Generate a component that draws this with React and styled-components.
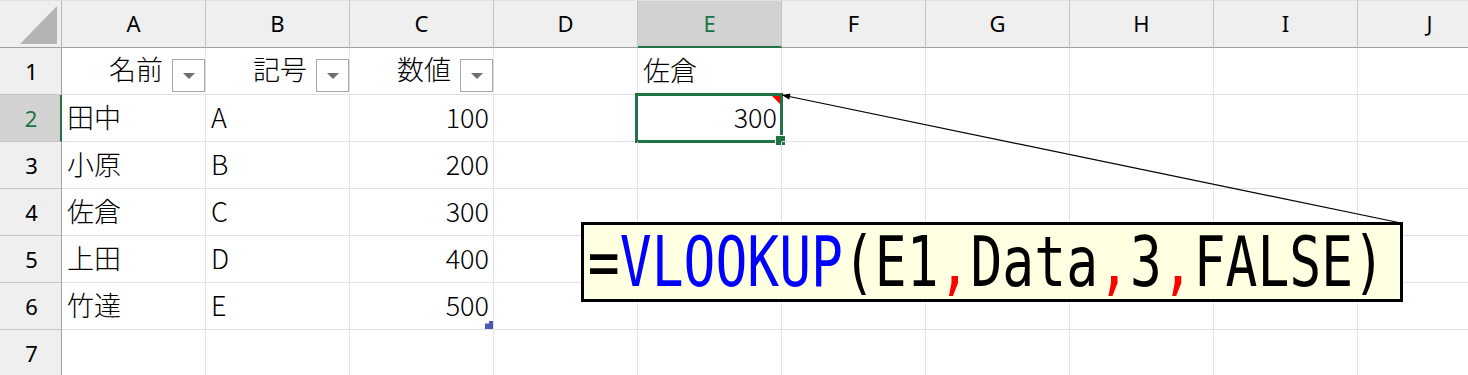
import React from 'react';
import styled, {createGlobalStyle} from 'styled-components';

const GlobalStyle = createGlobalStyle`
  body {
    margin:0;
    background:#fff;
    overflow:hidden;
  }
`;

const GREEN = '#217346';

const Sheet = styled.div`
  position:relative;
  width:1468px;
  height:375px;
  overflow:hidden;
  display:grid;
  grid-template-columns:62px repeat(10, 144px);
  grid-template-rows:48px repeat(7, 47px);
  font-family:'Noto Sans CJK JP', 'Noto Sans', sans-serif;
`;

const Corner = styled.div`
  background:#efefef;
  border-right:1px solid #b8b8b8;
  border-bottom:1px solid #a0a0a0;
  border-top:1px solid #e2e2e2;
  box-sizing:border-box;
  position:relative;
`;

const SelectAll = styled.div`
  position:absolute;
  right:4px;
  bottom:3px;
  width:0;
  height:0;
  border-left:37px solid transparent;
  border-bottom:38px solid #b4b4b4;
`;

const ColHeader = styled.div`
  background:${({$active}) => $active ? '#d2d2d2' : '#efefef'};
  color:${({$active}) => $active ? GREEN : '#000'};
  border-top:1px solid #e2e2e2;
  border-right:1px solid #c4c4c4;
  border-bottom:${({$active}) => $active ? `2px solid ${GREEN}` : '1px solid #a0a0a0'};
  box-sizing:border-box;
  display:flex;
  align-items:center;
  justify-content:center;
  font-family:'Noto Sans', 'Liberation Sans', sans-serif;
  font-size:22px;
  padding-bottom:2px;
`;

const RowHeader = styled.div`
  background:${({$active}) => $active ? '#d2d2d2' : '#efefef'};
  color:${({$active}) => $active ? GREEN : '#000'};
  border-right:${({$active}) => $active ? `2px solid ${GREEN}` : '1px solid #a0a0a0'};
  border-bottom:1px solid #c4c4c4;
  box-sizing:border-box;
  display:flex;
  align-items:center;
  justify-content:center;
  font-family:'Noto Sans', 'Liberation Sans', sans-serif;
  font-size:22px;
  padding-left:2px;
`;

const Cell = styled.div`
  position:relative;
  border-right:1px solid #e1e1e1;
  border-bottom:1px solid #e1e1e1;
  box-sizing:border-box;
  display:flex;
  align-items:center;
  justify-content:${({$align}) => $align === 'right' ? 'flex-end' : 'flex-start'};
  padding:0 4px 3px 5px;
  font-size:27px;
  font-weight:300;
  color:#000;
  white-space:nowrap;
`;

const HeadCell = styled(Cell)`
  gap:9px;
  padding:0 0 0 5px;
  justify-content:flex-end;
`;

const HeadLabel = styled.span`
  margin-bottom:6px;
`;

const FilterButton = styled.div`
  width:33px;
  height:33px;
  box-sizing:border-box;
  border:1px solid #a6a6a6;
  background:#fff;
  align-self:flex-end;
  margin-bottom:2px;
  display:flex;
  align-items:center;
  justify-content:center;
  &::after {
    content:'';
    width:0;
    height:0;
    border-left:6px solid transparent;
    border-right:6px solid transparent;
    border-top:6px solid #6f6f6f;
    margin-top:1px;
  }
`;

const Selection = styled.div`
  position:absolute;
  left:-3px;
  top:-2px;
  width:148px;
  height:50px;
  box-sizing:border-box;
  border:3px solid ${GREEN};
  pointer-events:none;
`;

const FillHandle = styled.div`
  position:absolute;
  right:-5px;
  bottom:-5px;
  width:9px;
  height:9px;
  background:${GREEN};
  box-shadow:0 0 0 1px #fff;
`;

const CommentMark = styled.div`
  position:absolute;
  right:0;
  top:0;
  width:0;
  height:0;
  border-left:10px solid transparent;
  border-top:10px solid #ff0000;
`;

const ResizeMark = styled.div`
  position:absolute;
  right:0;
  bottom:0;
  width:8px;
  height:8px;
  background:#4a5ab4;
  clip-path:polygon(50% 0, 100% 0, 100% 100%, 0 100%, 0 30%, 50% 30%);
`;

const Connector = styled.svg`
  position:absolute;
  left:0;
  top:0;
  pointer-events:none;
`;

const Callout = styled.div`
  position:absolute;
  left:581px;
  top:222px;
  width:822px;
  height:80px;
  box-sizing:border-box;
  border:3px solid #000;
  background:#ffffe1;
  display:flex;
  align-items:center;
`;

const Formula = styled.div`
  flex-shrink:0;
  font-family:'DejaVu Sans Mono', 'Liberation Mono', monospace;
  font-size:68.6px;
  line-height:1;
  white-space:pre;
  transform:scaleX(0.772);
  transform-origin:left center;
  padding-left:5px;
`;

const Token = styled.span`
  color:${({$color}) => $color || '#000'};
`;

const columns = ['A', 'B', 'C', 'D', 'E', 'F', 'G', 'H', 'I', 'J'];

const rows = [
  ['田中', 'A', '100'],
  ['小原', 'B', '200'],
  ['佐倉', 'C', '300'],
  ['上田', 'D', '400'],
  ['竹達', 'E', '500'],
];

const headers = ['名前', '記号', '数値'];

const tip = [782, 95];
const tail = [1401, 223];

const arrowHead = () => {
  const dx = tip[0] - tail[0];
  const dy = tip[1] - tail[1];
  const len = Math.hypot(dx, dy);
  const ux = dx / len;
  const uy = dy / len;
  const bx = tip[0] - ux * 8;
  const by = tip[1] - uy * 8;
  const px = -uy * 3.2;
  const py = ux * 3.2;
  return `${tip[0]},${tip[1]} ${bx + px},${by + py} ${bx - px},${by - py}`;
};

const App = () => {
  const renderRow = (r) => {
    const cells = [];
    for (let c = 0; c < 10; c++) {
      const key = `${r}-${c}`;
      if (r === 1 && c < 3) {
        cells.push(
          <HeadCell key={key}>
            <HeadLabel>{headers[c]}</HeadLabel>
            <FilterButton />
          </HeadCell>
        );
      } else if (r === 1 && c === 4) {
        cells.push(<Cell key={key}>佐倉</Cell>);
      } else if (r === 2 && c === 4) {
        cells.push(
          <Cell key={key} $align="right">
            300
            <CommentMark />
            <Selection>
              <FillHandle />
            </Selection>
          </Cell>
        );
      } else if (r >= 2 && r <= 6 && c < 3) {
        const value = rows[r - 2][c];
        cells.push(
          <Cell key={key} $align={c === 2 ? 'right' : 'left'}>
            {value}
            {r === 6 && c === 2 && <ResizeMark />}
          </Cell>
        );
      } else {
        cells.push(<Cell key={key} />);
      }
    }
    return cells;
  };

  return (
    <>
      <GlobalStyle />
      <Sheet>
        <Corner><SelectAll /></Corner>
        {columns.map(col => (
          <ColHeader key={col} $active={col === 'E'}>{col}</ColHeader>
        ))}
        {[1, 2, 3, 4, 5, 6, 7].map(r => (
          <React.Fragment key={r}>
            <RowHeader $active={r === 2}>{r}</RowHeader>
            {renderRow(r)}
          </React.Fragment>
        ))}
        <Connector width="1468" height="375">
          <line x1={tip[0]} y1={tip[1]} x2={tail[0]} y2={tail[1]} stroke="#000" strokeWidth="1.2" />
          <polygon points={arrowHead()} fill="#000" />
        </Connector>
        <Callout>
          <Formula>
            <Token>=</Token>
            <Token $color="#0000ff">VLOOKUP</Token>
            <Token>(E1</Token>
            <Token $color="#ff0000">,</Token>
            <Token>Data</Token>
            <Token $color="#ff0000">,</Token>
            <Token>3</Token>
            <Token $color="#ff0000">,</Token>
            <Token>FALSE)</Token>
          </Formula>
        </Callout>
      </Sheet>
    </>
  );
};

export default App;
